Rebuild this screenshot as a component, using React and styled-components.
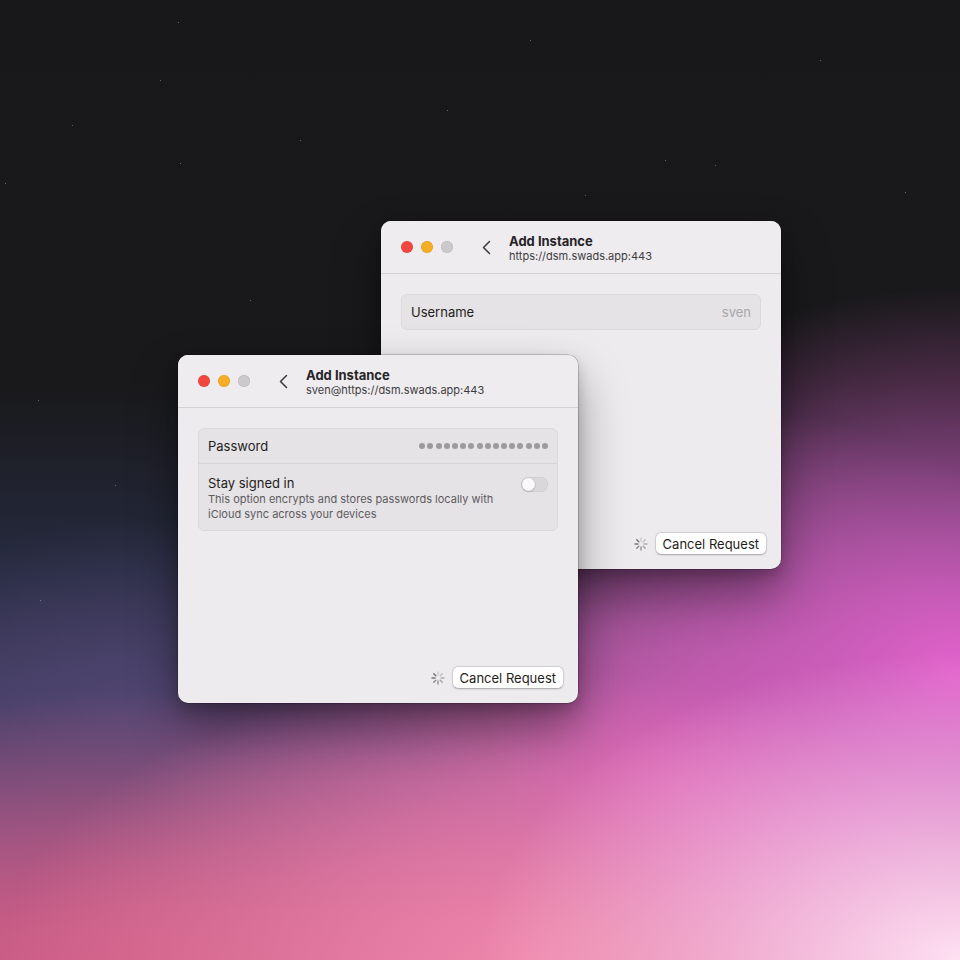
import React from 'react';
import styled, { createGlobalStyle } from 'styled-components';

const GlobalStyle = createGlobalStyle`
  html, body {
    margin: 0;
    padding: 0;
  }
  body {
    font-family: Inter, "Noto Sans", "Liberation Sans", sans-serif;
    -webkit-font-smoothing: antialiased;
  }
`;

const stars = [
  [178, 22], [160, 80], [72, 125], [5, 183], [447, 110], [665, 160], [715, 165],
  [585, 195], [905, 192], [180, 163], [40, 600], [38, 400], [115, 485], [300, 140],
  [820, 60], [530, 40], [250, 300],
];

const Desktop = styled.div`
  position: relative;
  width: 960px;
  height: 960px;
  overflow: hidden;
  background:
    radial-gradient(ellipse 50% 32% at 100% 100%, rgba(254, 224, 242, 1) 0%, rgba(250, 205, 232, 0) 100%),
    radial-gradient(ellipse 50% 40% at 100% 70%, rgba(226, 98, 204, 1) 0%, rgba(226, 98, 204, 0) 100%),
    radial-gradient(ellipse 55% 30% at 55% 100%, rgba(238, 134, 170, 1) 0%, rgba(238, 134, 170, 0) 100%),
    radial-gradient(ellipse 45% 28% at 15% 100%, rgba(204, 92, 132, 1) 0%, rgba(204, 92, 132, 0) 100%),
    radial-gradient(ellipse 55% 40% at 70% 82%, rgba(214, 100, 176, 0.95) 0%, rgba(214, 100, 176, 0) 100%),
    radial-gradient(ellipse 35% 22% at 15% 76%, rgba(84, 72, 118, 0.9) 0%, rgba(84, 72, 118, 0) 100%),
    linear-gradient(to bottom, #18181a 0%, #19191b 40%, #262b40 60%, #3e3a5c 72%, #8c5084 86%, #c86088 100%);
`;

const Star = styled.span`
  position: absolute;
  width: 1px;
  height: 1px;
  background: rgba(255, 255, 255, 0.35);
`;

const Window = styled.div`
  position: absolute;
  left: ${(p) => p.$x}px;
  top: ${(p) => p.$y}px;
  width: 400px;
  height: 348px;
  display: flex;
  flex-direction: column;
  background: #edebee;
  border-radius: 10px;
  box-shadow:
    0 0 0 0.5px rgba(0, 0, 0, 0.35),
    0 24px 48px rgba(0, 0, 0, 0.38),
    0 6px 14px rgba(0, 0, 0, 0.18);
  overflow: hidden;
`;

const TitleBar = styled.div`
  height: 52px;
  flex-shrink: 0;
  display: flex;
  align-items: center;
  padding: 0 20px;
  border-bottom: 1px solid #d4d2d5;
  background: #eeecef;
`;

const Lights = styled.div`
  display: flex;
  gap: 8px;
`;

const Light = styled.span`
  width: 12px;
  height: 12px;
  border-radius: 50%;
  background: ${(p) => p.$color};
  box-shadow: inset 0 0 0 0.5px rgba(0, 0, 0, 0.12);
`;

const BackButton = styled.div`
  margin-left: 27px;
  width: 12px;
  display: flex;
  align-items: center;
  justify-content: center;
`;

const Titles = styled.div`
  margin-left: 17px;
  display: flex;
  flex-direction: column;
  margin-top: 1px;
`;

const Title = styled.div`
  font-size: 13px;
  font-weight: 700;
  line-height: 16px;
  color: #262427;
`;

const Subtitle = styled.div`
  font-size: 11px;
  line-height: 14px;
  color: #3e3c3f;
`;

const Body = styled.div`
  flex: 1;
  display: flex;
  flex-direction: column;
  padding: 20px 20px 0;
`;

const Group = styled.div`
  background: #e5e3e6;
  border: 1px solid #dbd9dc;
  border-radius: 6px;
`;

const Row = styled.div`
  display: flex;
  align-items: ${(p) => (p.$top ? 'flex-start' : 'center')};
  justify-content: space-between;
  min-height: 34px;
  padding: ${(p) => (p.$top ? '11px 9px 8px 9px' : '0 9px')};
  & + & {
    border-top: 1px solid #d6d4d7;
  }
`;

const Label = styled.div`
  font-size: 13px;
  line-height: 16px;
  color: #1f1d20;
`;

const Value = styled.div`
  font-size: 13px;
  color: #a9a7aa;
`;

const Hint = styled.div`
  margin-top: 1px;
  font-size: 11px;
  line-height: 15px;
  color: #5d5b5e;
  max-width: 300px;
`;

const Dots = styled.div`
  display: flex;
  gap: 2.2px;
`;

const Dot = styled.span`
  width: 6px;
  height: 6px;
  border-radius: 50%;
  background: #9c9a9d;
`;

const Toggle = styled.div`
  width: 27px;
  height: 15px;
  border-radius: 8px;
  background: #d9d7da;
  box-shadow: inset 0 0 0 0.5px rgba(0, 0, 0, 0.08);
  position: relative;
  margin-top: 2px;
  &::after {
    content: '';
    position: absolute;
    left: 1px;
    top: 1px;
    width: 13px;
    height: 13px;
    border-radius: 50%;
    background: #fafafa;
    box-shadow: 0 0.5px 1.5px rgba(0, 0, 0, 0.3);
  }
`;

const Footer = styled.div`
  margin-top: auto;
  display: flex;
  align-items: center;
  justify-content: flex-end;
  gap: 8px;
  padding: 0 15px 15px 0;
  margin-right: -20px;
`;

const Button = styled.button`
  height: 21px;
  padding: 0 7px;
  border: none;
  border-radius: 5px;
  background: #ffffff;
  box-shadow: 0 0 0 0.5px rgba(0, 0, 0, 0.12), 0 0.5px 2px rgba(0, 0, 0, 0.25);
  font-family: Inter, "Noto Sans", "Liberation Sans", sans-serif;
  font-size: 13px;
  color: #1f1d20;
`;

function Chevron() {
  return (
    <svg width="9" height="15" viewBox="0 0 9 15" fill="none">
      <polyline points="7.5,1.5 1.5,7.5 7.5,13.5" stroke="#3a383b" strokeWidth="1.5" strokeLinecap="round" strokeLinejoin="round" />
    </svg>
  );
}

function Spinner() {
  const spokes = Array.from({ length: 8 }, (_, i) => i);
  return (
    <svg width="14" height="14" viewBox="-7 -7 14 14">
      {spokes.map((i) => (
        <line
          key={i}
          x1="0"
          y1="-3"
          x2="0"
          y2="-6"
          stroke="#6a686b"
          strokeWidth="1.4"
          strokeLinecap="round"
          opacity={0.25 + (i / 7) * 0.75}
          transform={`rotate(${i * 45})`}
        />
      ))}
    </svg>
  );
}

function WindowChrome({ subtitle, children }) {
  return (
    <>
      <TitleBar>
        <Lights>
          <Light $color="#f2473f" />
          <Light $color="#f6ad23" />
          <Light $color="#cbc9cc" />
        </Lights>
        <BackButton><Chevron /></BackButton>
        <Titles>
          <Title>Add Instance</Title>
          <Subtitle>{subtitle}</Subtitle>
        </Titles>
      </TitleBar>
      <Body>
        {children}
        <Footer>
          <Spinner />
          <Button>Cancel Request</Button>
        </Footer>
      </Body>
    </>
  );
}

export default function App() {
  return (
    <>
      <GlobalStyle />
      <Desktop>
        {stars.map(([x, y]) => (
          <Star key={`${x}-${y}`} style={{ left: x, top: y }} />
        ))}
        <Window $x={381} $y={221}>
          <WindowChrome subtitle="https://dsm.swads.app:443">
            <Group>
              <Row>
                <Label>Username</Label>
                <Value>sven</Value>
              </Row>
            </Group>
          </WindowChrome>
        </Window>
        <Window $x={178} $y={355}>
          <WindowChrome subtitle="sven@https://dsm.swads.app:443">
            <Group>
              <Row>
                <Label>Password</Label>
                <Dots>
                  {Array.from({ length: 16 }, (_, i) => <Dot key={i} />)}
                </Dots>
              </Row>
              <Row $top>
                <div>
                  <Label>Stay signed in</Label>
                  <Hint>This option encrypts and stores passwords locally with iCloud sync across your devices</Hint>
                </div>
                <Toggle />
              </Row>
            </Group>
          </WindowChrome>
        </Window>
      </Desktop>
    </>
  );
}
